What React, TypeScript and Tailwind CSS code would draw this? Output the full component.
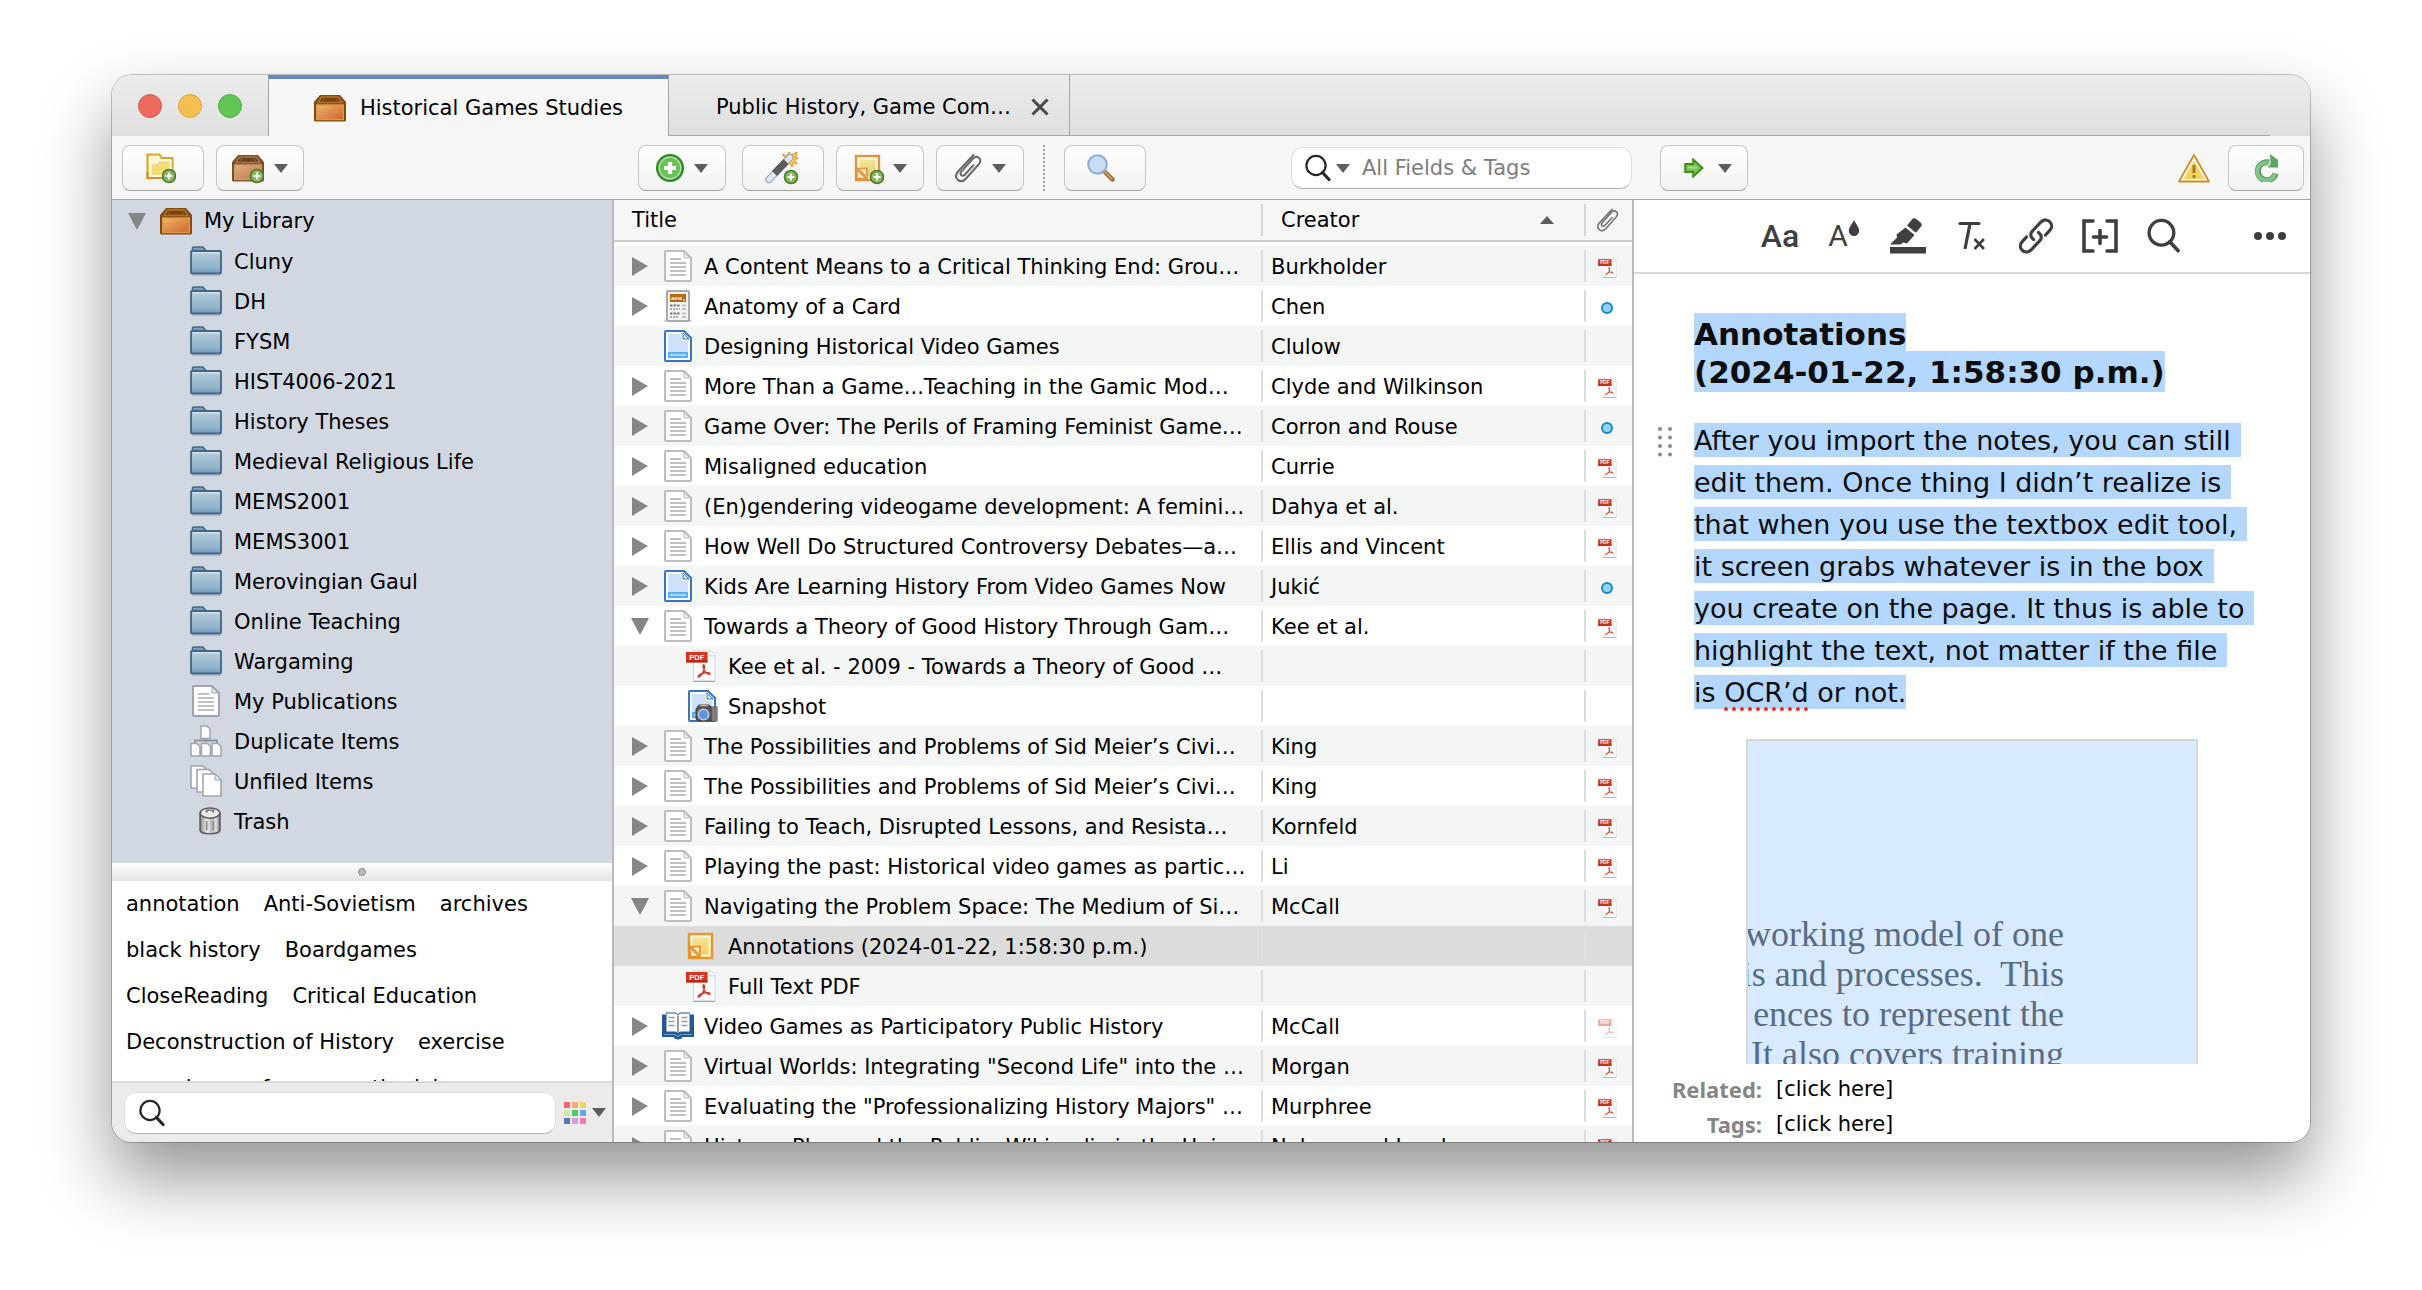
import React from "react";

/* ---------- small shared glyphs ---------- */

const TriDown = ({ className = "w-[14px] h-[9px] text-[#5e5e5e]" }: { className?: string }) => (
  <svg viewBox="0 0 14 9" className={"shrink-0 " + className} preserveAspectRatio="none" aria-hidden="true">
    <path d="M0 0h14L7 9z" fill="currentColor" />
  </svg>
);

const TriRight = () => (
  <svg viewBox="0 0 16 20" className="h-5 w-4 shrink-0 text-[#868686]" aria-hidden="true">
    <path d="M0 1l16 9-16 10z" fill="currentColor" />
  </svg>
);

const Plus = ({ x, y }: { x: number; y: number }) => (
  <g>
    <circle cx={x} cy={y} r="6.5" fill="#8ab45f" stroke="#4c7c2c" strokeWidth="1.6" />
    <path d={`M${x - 3.5} ${y}h7M${x} ${y - 3.5}v7`} stroke="#fff" strokeWidth="2.2" />
  </g>
);

const BoxIcon = ({ plus = false }: { plus?: boolean }) => (
  <svg viewBox="0 0 32 32" className="size-8 shrink-0" aria-hidden="true">
    <defs>
      <linearGradient id={plus ? "boxp" : "boxf"} x1="0" y1="0" x2="1" y2="1">
        <stop offset="0" stopColor={plus ? "#dcae7c" : "#efb668"} />
        <stop offset="1" stopColor={plus ? "#c27a4a" : "#cf6430"} />
      </linearGradient>
    </defs>
    <path d="M6 3h20l6 7v18a1.500 1.500 0 0 1-1.500 1.500h-29A1.500 1.500 0 0 1 0 28V10z" fill={plus ? "#7d4e29" : "#834910"} />
    <path d="M7.500 5h17l3.500 5.500h-24z" fill={plus ? "#6c4021" : "#7a430e"} stroke={plus ? "#a3764e" : "#b07332"} strokeWidth="1.400" />
    <path d="M10.500 5L8 10.500M21.500 5L24 10.500" stroke={plus ? "#8e6240" : "#96591e"} strokeWidth="1.200" />
    <rect x="2.700" y="13" width="26.600" height="14.500" fill={`url(#${plus ? "boxp" : "boxf"})`} stroke={plus ? "#c99a6d" : "#dd9a4b"} strokeWidth="1.400" />
    {plus && <Plus x={25} y={24} />}
  </svg>
);

const Folder = () => (
  <svg viewBox="0 0 32 30" className="h-[30px] w-8 shrink-0" aria-hidden="true">
    <defs>
      <linearGradient id="fold" x1="0" y1="0" x2="0" y2="1">
        <stop offset="0" stopColor="#b9cfdf" />
        <stop offset="0.750" stopColor="#8fb2cb" />
        <stop offset="1" stopColor="#6b9bbe" />
      </linearGradient>
    </defs>
    <path d="M2 29.500h28" stroke="#aab6c6" strokeWidth="1" />
    <path d="M2.500 5V2a1 1 0 0 1 1-1h9.500l3.500 4.500z" fill="#7ba0bf" stroke="#46688a" strokeWidth="1.600" />
    <rect x="1" y="5" width="30" height="22.500" rx="1" fill="url(#fold)" stroke="#446580" strokeWidth="1.800" />
    <path d="M2.500 6.800h27" stroke="#d3e1ea" strokeWidth="1.400" />
  </svg>
);

const Doc = ({ edge = "#bdbdbd" }: { edge?: string }) => (
  <svg viewBox="0 0 28 32" className="h-8 w-7 shrink-0" aria-hidden="true">
    <path d="M1 2a1 1 0 0 1 1-1h18l7 7v22a1 1 0 0 1-1 1H2a1 1 0 0 1-1-1z" fill="#fff" stroke={edge} strokeWidth="2" />
    <path d="M20 2v6h6z" fill="#ececec" stroke={edge} strokeWidth="1" />
    <path d="M6 9h11M6 13h16M6 17h16M6 21h16M6 25h16" stroke="#adadad" strokeWidth="1.700" />
  </svg>
);

const BlueDoc = ({ camera = false }: { camera?: boolean }) => (
  <svg viewBox="0 0 28 32" className={camera ? "h-8 w-7 shrink-0 overflow-visible" : "h-8 w-7 shrink-0"} aria-hidden="true">
    <path d="M1 2a1 1 0 0 1 1-1h18l7 7v22a1 1 0 0 1-1 1H2a1 1 0 0 1-1-1z" fill="#fff" stroke="#3a74c0" strokeWidth="2" />
    <path d="M4 4h13v7h7v17H4z" fill="#cfe0fa" />
    <path d="M19 3v6h6z" fill="#dce9fb" stroke="#3a74c0" strokeWidth="1" />
    <rect x="4" y="22" width="20" height="6" fill="#55b1f5" />
    <path d="M6 25h16" stroke="#bfe2fc" strokeWidth="1.600" />
    {camera && (
      <g>
        <path d="M8 19l3-4h10l2 2h6v14H10l-2-2z" fill="#54565a" stroke="#3b3c3f" strokeWidth="1" />
        <path d="M24 17h5v14h-5z" fill="#7c7e82" />
        <path d="M12 15.500h8" stroke="#d8b45b" strokeWidth="1.500" />
        <circle cx="15.500" cy="24.500" r="6" fill="#c4cbd6" />
        <circle cx="15.500" cy="24.500" r="4.500" fill="#5d94e0" />
      </g>
    )}
  </svg>
);

const Newspaper = () => (
  <svg viewBox="0 0 28 32" className="h-8 w-7 shrink-0" aria-hidden="true">
    <path d="M0 30.500h28" stroke="#c9c9c9" strokeWidth="2" />
    <rect x="3" y="1" width="22" height="30" rx="1" fill="#f4f4f4" stroke="#a9a9a9" strokeWidth="2" />
    <rect x="6" y="4" width="16" height="8" fill="#b9690c" />
    <path d="M8 10v-2h2v2M12 10V8h3v2M17 10V7M19 10h2" stroke="#fff" strokeWidth="1.200" fill="none" />
    <path d="M6 15.500h10M6 23.500h10" stroke="#777" strokeWidth="2" strokeDasharray="2.500 1" />
    <path d="M6 19h10M6 27h8" stroke="#aaa" strokeWidth="1.800" strokeDasharray="2 1" />
    <path d="M18 15.500h4M18 19h4M18 23.500h4M18 27h4" stroke="#c4c4c4" strokeWidth="2" />
  </svg>
);

const Pdf = ({ className }: { className: string }) => (
  <svg viewBox="0 0 30 32" className={"shrink-0 " + className} aria-hidden="true">
    <path d="M7.500 1h17.500l4 4v26H7.500z" fill="#fcfcfc" stroke="#d9d9d9" strokeWidth="1" />
    <path d="M7.500 31.500H29" stroke="#a9a9a9" strokeWidth="1.400" />
    <path d="M24 1v5h5" fill="none" stroke="#d0d0d0" strokeWidth="1" />
    <path d="M17.500 15c1.800 0 .8 4.800-.8 7.600-1.400 2.600-3.600 5-4.400 4.200-1-1 2.200-3 5.600-3.800 3.200-.8 6.400-.4 6.100.8-.3 1.200-3.600-.2-5.100-2.600-1.400-2.200-2.600-6.200-1.400-6.200z" fill="none" stroke="#d33a2c" strokeWidth="1.400" />
    <rect x="0" y="2" width="21.500" height="10.500" fill="#d5321f" />
    <path d="M0 11.500h21.500" stroke="#a8220f" strokeWidth="1.500" />
    <text x="10.800" y="10" fontSize="7.500" fontWeight="bold" fill="#fff" textAnchor="middle" fontFamily="Liberation Sans, sans-serif">PDF</text>
  </svg>
);

const Note = ({ plus = false }: { plus?: boolean }) => (
  <svg viewBox="0 0 30 30" className="size-[30px] shrink-0 overflow-visible" aria-hidden="true">
    <defs>
      <linearGradient id={plus ? "notep" : "note"} x1="0" y1="0" x2="0" y2="1">
        <stop offset="0" stopColor="#f6eaa6" />
        <stop offset="1" stopColor={plus ? "#e6c95c" : "#f4cb4c"} />
      </linearGradient>
    </defs>
    <rect x="3" y="3" width="23" height="24" fill={`url(#${plus ? "notep" : "note"})`} stroke={plus ? "#de9442" : "#e9962f"} strokeWidth="2.400" />
    <path d="M5.500 24V5.500h18v19H14" fill="none" stroke="#fdf7dd" strokeWidth="2" />
    <path d="M4 15.500h10v10H4z" fill="#fbe6c6" stroke={plus ? "#de9442" : "#e08d26"} strokeWidth="1.600" />
    <path d="M5 16.500l8.500 8.500" stroke="#e09a44" strokeWidth="3" />
    {plus && <Plus x={24} y={24} />}
  </svg>
);

const Book = () => (
  <svg viewBox="0 0 32 30" className="-ml-[2px] h-[30px] w-8 shrink-0" aria-hidden="true">
    <path d="M0 3.500h4V1.500h9.500L16 3l2.500-1.500H28v2h4v22.500H20.500c-.5 1.500-2 2.500-4.500 2.500s-4-1-4.500-2.500H0z" fill="#235a92" />
    <path d="M4.500 2.500h8.500c1.500 0 2.500.8 3 2 .500-1.200 1.500-2 3-2h8.500v18H19c-1.500 0-2.500.8-3 2-.5-1.200-1.500-2-3-2H4.500z" fill="#fdfdfd" />
    <path d="M16 4.500v17.500" stroke="#8f9cab" strokeWidth="2" />
    <path d="M6.500 6.500h6M6.500 10.500h6M6.500 14.500h6M19.500 6.500h6M19.500 10.500h6M19.500 14.500h6" stroke="#9a9a9a" strokeWidth="1.700" />
    <path d="M2 23.500h10.500c1.500 0 2.500 2 3.500 2s2-2 3.500-2H30" stroke="#6d9dcb" strokeWidth="1.200" fill="none" />
  </svg>
);

const Duplicates = () => {
  const page = (x: number, y: number) => (
    <path key={x} d={`M${x} ${y}h6l3 3v9.500h-9z`} fill="#fff" stroke="#9ea4b0" strokeWidth="1.500" />
  );
  return (
    <svg viewBox="0 0 32 32" className="size-8 shrink-0" aria-hidden="true">
      <path d="M15.500 12v5M5 18v-2.500h22V18" fill="none" stroke="#8e939d" strokeWidth="1.800" />
      {page(11, 1)}
      {page(1, 18.5)}
      {page(11.5, 18.5)}
      {page(22, 18.5)}
    </svg>
  );
};

const Unfiled = () => (
  <svg viewBox="0 0 32 32" className="size-8 shrink-0" aria-hidden="true">
    <path d="M1 1h12l4 4v18H1z" fill="#fff" stroke="#9ea4b0" strokeWidth="1.600" />
    <path d="M7 4.500h12l4 4V27H7z" fill="#fff" stroke="#9ea4b0" strokeWidth="1.600" />
    <path d="M13 9h12l6 6v16H13z" fill="#fff" stroke="#9ea4b0" strokeWidth="1.600" />
    <path d="M25 9v6h6z" fill="#ececf0" stroke="#9ea4b0" strokeWidth="1" />
  </svg>
);

const Trash = () => (
  <svg viewBox="0 0 20 30" className="ml-[9px] mr-px h-[28px] w-[22px] shrink-0" preserveAspectRatio="none" aria-hidden="true">
    <defs>
      <linearGradient id="can" x1="0" y1="0" x2="1" y2="0">
        <stop offset="0" stopColor="#8b8b8b" />
        <stop offset="0.350" stopColor="#eeeeee" />
        <stop offset="0.600" stopColor="#b5b5b5" />
        <stop offset="0.800" stopColor="#e2e2e2" />
        <stop offset="1" stopColor="#777" />
      </linearGradient>
    </defs>
    <path d="M1 7v18c0 5 18 5 18 0V7z" fill="url(#can)" stroke="#5b5b5b" strokeWidth="1.500" />
    <ellipse cx="10" cy="6.500" rx="9" ry="5.500" fill="#e9e9e9" stroke="#5b5b5b" strokeWidth="1.500" />
    <path d="M7 6V3.500h6V6" fill="none" stroke="#777" strokeWidth="1.800" />
    <path d="M7 15v10M13 15v10" stroke="#8a8a8a" strokeWidth="1.500" />
  </svg>
);

const Clip = ({ className = "h-8 w-7", stroke = "#666" }: { className?: string; stroke?: string }) => (
  <svg viewBox="0 0 28 32" className={"shrink-0 " + className} aria-hidden="true" fill="none" stroke={stroke} strokeWidth="2" strokeLinecap="round" strokeLinejoin="round">
    <path d="M19.500 3L4 19.500c-3 3.500-2.300 7 .2 8.700 2.400 1.600 5.300 1 7.600-1.500L25 12c2-2.500 1.500-5-.2-6.300-1.800-1.300-4.200-.9-6 1.100L7.500 19.300c-1.300 1.600-1.100 3.100-.2 3.900 1 .8 2.600.5 3.700-.7l8.500-9.300" />
  </svg>
);

const SearchGlyph = ({ className = "h-7 w-[26px]", stroke = "#262626", heavy = false }: { className?: string; stroke?: string; heavy?: boolean }) => (
  <svg viewBox="0 0 26 28" className={"shrink-0 " + className} aria-hidden="true" fill="none" stroke={stroke}>
    <circle cx="11" cy="11.500" r="9.600" strokeWidth={heavy ? 2.6 : 2.2} />
    <path d="M17.500 18.500l6.500 7" strokeWidth={heavy ? 2.8 : 3.2} strokeLinecap="round" />
  </svg>
);

/* ---------- data ---------- */

const collections = [
  "Cluny", "DH", "FYSM", "HIST4006-2021", "History Theses", "Medieval Religious Life",
  "MEMS2001", "MEMS3001", "Merovingian Gaul", "Online Teaching", "Wargaming",
];

const specials: [string, React.ReactNode][] = [
  ["My Publications", <span className="mx-[2px]"><Doc edge="#9ea4b0" /></span>],
  ["Duplicate Items", <Duplicates />],
  ["Unfiled Items", <Unfiled />],
  ["Trash", <Trash />],
];

const tagRows = [
  ["annotation", "Anti-Sovietism", "archives"],
  ["black history", "Boardgames"],
  ["CloseReading", "Critical Education"],
  ["Deconstruction of History", "exercise"],
  ["experience of war", "methodology"],
];

type Kind = "doc" | "news" | "blue" | "book" | "pdf" | "snap" | "note";
type Item = { t: string; c?: string; k: Kind; s: "closed" | "open" | "none"; a?: "pdf" | "faded" | "dot"; child?: boolean; selected?: boolean };

const items: Item[] = [
  { t: "A Content Means to a Critical Thinking End: Grou…", c: "Burkholder", k: "doc", s: "closed", a: "pdf" },
  { t: "Anatomy of a Card", c: "Chen", k: "news", s: "closed", a: "dot" },
  { t: "Designing Historical Video Games", c: "Clulow", k: "blue", s: "none" },
  { t: "More Than a Game...Teaching in the Gamic Mod…", c: "Clyde and Wilkinson", k: "doc", s: "closed", a: "pdf" },
  { t: "Game Over: The Perils of Framing Feminist Game…", c: "Corron and Rouse", k: "doc", s: "closed", a: "dot" },
  { t: "Misaligned education", c: "Currie", k: "doc", s: "closed", a: "pdf" },
  { t: "(En)gendering videogame development: A femini…", c: "Dahya et al.", k: "doc", s: "closed", a: "pdf" },
  { t: "How Well Do Structured Controversy Debates—a…", c: "Ellis and Vincent", k: "doc", s: "closed", a: "pdf" },
  { t: "Kids Are Learning History From Video Games Now", c: "Jukić", k: "blue", s: "closed", a: "dot" },
  { t: "Towards a Theory of Good History Through Gam…", c: "Kee et al.", k: "doc", s: "open", a: "pdf" },
  { t: "Kee et al. - 2009 - Towards a Theory of Good …", k: "pdf", s: "none", child: true },
  { t: "Snapshot", k: "snap", s: "none", child: true },
  { t: "The Possibilities and Problems of Sid Meier’s Civi…", c: "King", k: "doc", s: "closed", a: "pdf" },
  { t: "The Possibilities and Problems of Sid Meier’s Civi…", c: "King", k: "doc", s: "closed", a: "pdf" },
  { t: "Failing to Teach, Disrupted Lessons, and Resista…", c: "Kornfeld", k: "doc", s: "closed", a: "pdf" },
  { t: "Playing the past: Historical video games as partic…", c: "Li", k: "doc", s: "closed", a: "pdf" },
  { t: "Navigating the Problem Space: The Medium of Si…", c: "McCall", k: "doc", s: "open", a: "pdf" },
  { t: "Annotations (2024-01-22, 1:58:30 p.m.)", k: "note", s: "none", child: true, selected: true },
  { t: "Full Text PDF", k: "pdf", s: "none", child: true },
  { t: "Video Games as Participatory Public History", c: "McCall", k: "book", s: "closed", a: "faded" },
  { t: "Virtual Worlds: Integrating \"Second Life\" into the …", c: "Morgan", k: "doc", s: "closed", a: "pdf" },
  { t: "Evaluating the \"Professionalizing History Majors\" …", c: "Murphree", k: "doc", s: "closed", a: "pdf" },
  { t: "History, Play and the Public: Wikipedia in the Uni…", c: "Nelson and Lund", k: "doc", s: "closed", a: "pdf" },
];

const kindIcon: Record<Kind, React.ReactNode> = {
  doc: <Doc />,
  news: <Newspaper />,
  blue: <BlueDoc />,
  book: <Book />,
  pdf: <Pdf className="h-8 w-[30px]" />,
  snap: <span className="ml-[2px]"><BlueDoc camera /></span>,
  note: <Note />,
};

/* ---------- pieces ---------- */

const ToolButton = ({ label, menu = false, className = "", children }: { label: string; menu?: boolean; className?: string; children: React.ReactNode }) => (
  <button
    type="button"
    aria-label={label}
    className={
      "flex h-[46px] shrink-0 items-center justify-center gap-[10px] rounded-lg border border-[#c6c6c6] border-b-[#a2a2a2] bg-linear-to-b from-white to-[#f2f2f2] " +
      (menu ? "w-[88px] " : "w-[82px] ") + className
    }
  >
    {children}
    {menu && <TriDown />}
  </button>
);

const TabBar = () => (
  <div className="flex h-[61px] shrink-0 bg-linear-to-b from-[#ececec] to-[#dfdfdf]">
    <div className="flex w-[156px] shrink-0 items-center gap-4 pt-px pl-[26px]">
      <button type="button" aria-label="Close window" className="size-6 rounded-full border border-[#d35b4e] bg-[#ec6a5e]" />
      <button type="button" aria-label="Minimize window" className="size-6 rounded-full border border-[#d9a63d] bg-[#f4bf4f]" />
      <button type="button" aria-label="Zoom window" className="size-6 rounded-full border border-[#53ae46] bg-[#61c454]" />
    </div>
    <button type="button" className="flex w-[401px] shrink-0 items-center justify-center gap-[14px] border-x border-t-4 border-x-[#a6a6a6] border-t-[#6787c4] bg-[#f6f6f6]">
      <BoxIcon />
      <span>Historical Games Studies</span>
    </button>
    <div className="flex w-[401px] shrink-0 items-center justify-end gap-5 border-r border-b border-[#a6a6a6] pt-1 pr-5">
      <button type="button" className="whitespace-nowrap">Public History, Game Com…</button>
      <button type="button" aria-label="Close tab">
        <svg viewBox="0 0 18 18" className="size-[18px]" stroke="#484848" strokeWidth="3"><path d="M1.500 1.500l15 15M16.500 1.500l-15 15" /></svg>
      </button>
    </div>
    <div className="mr-10 flex-1 border-b border-[#a6a6a6]" />
  </div>
);

const Toolbar = () => (
  <div className="grid h-16 shrink-0 grid-cols-[502px_minmax(0,1020fr)_minmax(0,676fr)] items-center border-b border-[#a6a6a6] bg-[#f6f6f6] pt-px">
    <div className="flex gap-3 pl-[10px]">
      <ToolButton label="New collection">
        <svg viewBox="0 0 30 32" className="mr-1 h-8 w-[30px]" aria-hidden="true">
          <path d="M1.500 26V2.500h12l2 3.500h11V26z" fill="#fdf6d2" stroke="#d9a92e" strokeWidth="2.200" />
          <path d="M4.500 24V12.500h7l3-3h10V24z" fill="#f4dd74" stroke="#fffbe8" strokeWidth="2" />
          <path d="M5 13h6l3-3h10" fill="none" stroke="#e6c455" strokeWidth="1.200" />
          <path d="M1.500 20v6h25" fill="none" stroke="#dd8f2b" strokeWidth="2.200" />
          <Plus x={23} y={24} />
        </svg>
      </ToolButton>
      <ToolButton label="New library" menu><BoxIcon plus /></ToolButton>
    </div>

    <div className="flex items-center gap-3 pl-6">
      <ToolButton label="New item" menu className="mr-1">
        <svg viewBox="0 0 28 28" className="size-7" aria-hidden="true">
          <circle cx="14" cy="14" r="13" fill="#5cb84f" stroke="#2c8a26" strokeWidth="2" />
          <circle cx="14" cy="14" r="10.800" fill="#6cc05b" stroke="#b6e0a6" strokeWidth="1.200" />
          <path d="M14 8v12M8 14h12" stroke="#fff" strokeWidth="4.200" />
        </svg>
      </ToolButton>
      <ToolButton label="Add item by identifier">
        <svg viewBox="0 0 32 32" className="mr-1 size-8 overflow-visible" aria-hidden="true">
          <path d="M24 0l1.500 3.500L32 0l-1.500 5 2.500 1-3.500 2 3 4-4.500-1.500L27 15l-4-6-6-7 5 2z" fill="#fbd034" stroke="#f08a24" strokeWidth="1" />
          <path d="M4 27.500L25 5.500" stroke="#9aa9bc" strokeWidth="7.500" strokeLinecap="round" />
          <path d="M4 27.500L25 5.500" stroke="#dfe8f2" strokeWidth="5" strokeLinecap="round" />
          <path d="M9.500 21.500L21 9.500" stroke="#5c5c5c" strokeWidth="7" />
          <Plus x={26} y={25} />
        </svg>
      </ToolButton>
      <ToolButton label="New note" menu><Note plus /></ToolButton>
      <ToolButton label="Add attachment" menu><Clip /></ToolButton>
      <div className="mx-[7px] h-[46px] shrink-0 border-l-2 border-dotted border-[#9d9d9d]" />
      <ToolButton label="Advanced search">
        <svg viewBox="0 0 28 28" className="mr-2 size-7" aria-hidden="true">
          <path d="M17 17l8.500 8.500" stroke="#a3682c" strokeWidth="4.500" strokeLinecap="round" />
          <path d="M18 18l7 7" stroke="#d7a36a" strokeWidth="1.500" strokeLinecap="round" />
          <circle cx="10.500" cy="10.500" r="9.300" fill="#c9dcf5" stroke="#8ea9d4" strokeWidth="2" />
        </svg>
      </ToolButton>
      <div className="mr-[2px] ml-auto flex h-[42px] w-[341px] items-center gap-[5px] rounded-xl border border-[#dedede] border-b-[#b2b2b2] bg-white pl-[13px]">
        <SearchGlyph />
        <TriDown />
        <input type="search" aria-label="Search library" placeholder="All Fields & Tags" className="ml-[7px] w-full min-w-0 bg-transparent outline-none placeholder:text-[#7d7d7d]" />
      </div>
    </div>

    <div className="flex items-center pr-[6px] pl-[26px]">
      <ToolButton label="Locate" menu>
        <svg viewBox="0 0 20 20" className="mr-1 ml-2 size-5" aria-hidden="true">
          <path d="M1.200 6h8V1.500L18.500 10 9.200 18.500V14h-8z" fill="#7cbf52" stroke="#3f8f1e" strokeWidth="2" />
          <path d="M4 9.500h9" stroke="#a9d98c" strokeWidth="2" />
        </svg>
      </ToolButton>
      <button type="button" aria-label="Sync error" className="mr-[18px] ml-auto">
        <svg viewBox="0 0 32 30" className="h-[30px] w-8">
          <path d="M16 2L31 28.500H1z" fill="#fff" stroke="#d28b22" strokeWidth="1.800" strokeLinejoin="round" />
          <path d="M16 7.500L26.500 26h-21z" fill="#f3d35b" />
          <path d="M16 12v8M16 22v3" stroke="#ab762d" strokeWidth="3" />
        </svg>
      </button>
      <button type="button" aria-label="Sync" className="flex h-[46px] w-[76px] items-center justify-center rounded-lg border border-[#c6c6c6] border-b-[#a2a2a2] bg-linear-to-b from-white to-[#f2f2f2]">
        <svg viewBox="0 0 26 28" className="h-7 w-[26px]">
          <path d="M22.500 19.500A9 9 0 1 1 16 8.500" fill="none" stroke="#4f9a57" strokeWidth="6" />
          <path d="M22 19.700A9 9 0 1 1 15.500 8.700" fill="none" stroke="#84c48a" strokeWidth="4" />
          <path d="M17 0l8 6v7.500H14.500l3-3.500z" fill="#5aa662" />
        </svg>
      </button>
    </div>
  </div>
);

const Sidebar = () => (
  <aside className="flex min-h-0 flex-col border-r-2 border-[#bababa]">
    <ul className="min-h-0 flex-1 overflow-hidden bg-[#d2d8e2] pt-px">
      <li className="flex h-10 items-center pl-4">
        <TriDown className="mr-[14px] h-[17px] w-[18px] text-[#868686]" />
        <BoxIcon />
        <span className="ml-3">My Library</span>
      </li>
      {collections.map((name) => (
        <li key={name} className="flex h-10 items-center gap-3 pl-[78px]"><Folder /><span className="pt-0.5">{name}</span></li>
      ))}
      {specials.map(([name, icon]) => (
        <li key={name} className="flex h-10 items-center gap-3 pl-[78px]">{icon}<span className="pt-0.5">{name}</span></li>
      ))}
    </ul>
    <div className="flex h-[18px] shrink-0 items-center justify-center bg-linear-to-b from-white to-[#e4e4e4]">
      <div className="size-2 rounded-full border border-[#8f8f8f] bg-[#b9b9b9]" />
    </div>
    <div className="h-[200px] shrink-0 overflow-hidden bg-white pl-[14px]">
      {tagRows.map((row) => (
        <div key={row[0]} className="flex h-[46px] items-center gap-6">
          {row.map((tag) => <button key={tag} type="button" className="whitespace-nowrap">{tag}</button>)}
        </div>
      ))}
    </div>
    <div className="flex h-[61px] shrink-0 items-center gap-2 border-t-2 border-[#d9d9d9] bg-[#ebebeb] pt-1 pr-[6px] pb-1 pl-3">
      <div className="flex h-[42px] flex-1 items-center gap-2 rounded-xl border border-[#dedede] border-b-[#b2b2b2] bg-white pl-[14px]">
        <SearchGlyph />
        <input type="search" aria-label="Filter tags" className="w-full min-w-0 bg-transparent outline-none" />
      </div>
      <button type="button" aria-label="Tag options" className="flex items-center gap-[6px]">
        <span className="grid grid-cols-3 gap-[2px]">
          <i className="size-[6px] bg-[#ff6666]" /><i className="size-[6px] bg-[#ffa870]" /><i className="size-[6px] bg-[#efd35f]" />
          <i className="size-[6px] bg-[#cde8a9]" /><i className="size-[6px] bg-[#4bcb66]" /><i className="size-[6px] bg-[#5cabe9]" />
          <i className="size-[6px] bg-[#5877b4]" /><i className="size-[6px] bg-[#d99bdf]" /><i className="size-[6px] bg-[#ff75ae]" />
        </span>
        <TriDown />
      </button>
    </div>
  </aside>
);

const Attachment = ({ a }: { a?: Item["a"] }) => {
  if (a === "dot") return <span className="block size-3 rounded-full border-2 border-[#1688cb] bg-[#93d2fa]" />;
  if (a === "faded") return <span className="opacity-40"><Pdf className="h-5 w-[19px]" /></span>;
  if (a === "pdf") return <Pdf className="h-5 w-[19px]" />;
  return null;
};

const ItemTable = () => (
  <div className="min-h-0 overflow-hidden border-r-2 border-[#bababa] bg-white">
    <table className="w-full table-fixed border-collapse text-left whitespace-nowrap">
      <colgroup>
        <col />
        <col className="w-[323px]" />
        <col className="w-12" />
      </colgroup>
      <thead>
        <tr>
          <th className="p-0 pb-1 font-normal">
            <div className="flex h-[42px] items-center border-b-2 border-[#cbcbcb] bg-[#f6f6f6] pl-[18px]">Title</div>
          </th>
          <th className="p-0 pb-1 font-normal" aria-sort="ascending">
            <div className="flex h-[42px] items-center border-b-2 border-[#cbcbcb] bg-[#f6f6f6]">
              <div className="flex h-8 flex-1 items-center border-l-2 border-[#d6d6d6] pr-[30px] pl-[18px]">
                <span className="flex-1">Creator</span>
                <TriDown className="h-2 w-[14px] rotate-180 text-[#5e5e5e]" />
              </div>
            </div>
          </th>
          <th className="p-0 pb-1 font-normal" aria-label="Attachments">
            <div className="flex h-[42px] items-center border-b-2 border-[#cbcbcb] bg-[#f6f6f6]">
              <div className="flex h-8 flex-1 items-center justify-center border-l-2 border-[#d6d6d6] pr-1">
                <Clip className="h-[26px] w-[23px]" stroke="#747474" />
              </div>
            </div>
          </th>
        </tr>
      </thead>
      <tbody>
        {items.map((it, i) => (
          <tr key={i} className={it.selected ? "bg-[#dcdcdc]" : i % 2 === 0 ? "bg-[#f4f5f5]" : "bg-white"}>
            <td className="p-0">
              <div className={"flex h-10 items-center overflow-hidden " + (it.child ? "pl-[72px]" : "pl-[18px]")}>
                {!it.child && (
                  <span className="mr-4 flex w-4 shrink-0 justify-center">
                    {it.s === "closed" && <TriRight />}
                    {it.s === "open" && <TriDown className="-mx-px h-[17px] w-[18px] text-[#868686]" />}
                  </span>
                )}
                <span className={"flex shrink-0 items-center " + (it.child ? "w-[42px]" : "w-10")}>{kindIcon[it.k]}</span>
                <span className="pt-0.5">{it.t}</span>
              </div>
            </td>
            <td className="p-0">
              <div className={"flex h-8 items-center border-l-2 pt-0.5 pl-2 " + (it.selected ? "border-[#e0e0e0]" : "border-[#dcdcdc]")}>{it.c}</div>
            </td>
            <td className="p-0">
              <div className={"flex h-8 items-center justify-center border-l-2 pt-1 pr-1 " + (it.selected ? "border-[#e0e0e0]" : "border-[#dcdcdc]")}>
                <Attachment a={it.a} />
              </div>
            </td>
          </tr>
        ))}
      </tbody>
    </table>
  </div>
);

const noteLines = [
  "After you import the notes, you can still",
  "edit them. Once thing I didn’t realize is",
  "that when you use the textbox edit tool,",
  "it screen grabs whatever is in the box",
  "you create on the page. It thus is able to",
  "highlight the text, not matter if the file",
];

const EditorButton = ({ label, children }: { label: string; children: React.ReactNode }) => (
  <button type="button" aria-label={label} className="flex size-10 items-center justify-center text-[#3f3f3f]">{children}</button>
);

const NotePane = () => (
  <section className="flex min-h-0 flex-col bg-white">
    <div className="flex h-[74px] shrink-0 items-center justify-end gap-6 border-b-2 border-[#d8d8d8] pr-5">
      <EditorButton label="Format text">
        <span className="font-['Roboto',sans-serif] text-[32px] leading-none font-medium">Aa</span>
      </EditorButton>
      <EditorButton label="Highlight text colour">
        <span className="font-['Roboto',sans-serif] text-[30px] leading-none">A</span>
        <svg viewBox="0 0 12 18" className="mb-4 h-[17px] w-3" aria-hidden="true"><path d="M6 0c2 4.500 5.500 7.500 5.500 11.500a5.500 5.500 0 0 1-11 0C.5 7.500 4 4.500 6 0z" fill="currentColor" /></svg>
      </EditorButton>
      <EditorButton label="Highlight">
        <svg viewBox="0 0 36 36" className="size-9" aria-hidden="true" fill="currentColor">
          <path d="M0 29h36v6.500H0z" />
          <path d="M17 7.500l5-6a3 3 0 0 1 4.200-.5l4.300 3.600a3 3 0 0 1 .4 4.200l-5 6z" />
          <path d="M15.500 9.500l9 7.500-7.500 8.500-4-1-2 2H0l7-7-.500-3z" />
        </svg>
      </EditorButton>
      <EditorButton label="Clear formatting">
        <svg viewBox="0 0 30 30" className="h-[30px] w-[30px]" aria-hidden="true" fill="none" stroke="currentColor">
          <path d="M3 2.500h19" strokeWidth="3.200" strokeLinecap="round" />
          <path d="M13 2.500L8 28" strokeWidth="3.200" />
          <path d="M17.500 18l9.500 10M27 18l-9.500 10" strokeWidth="2.600" />
        </svg>
      </EditorButton>
      <EditorButton label="Insert link">
        <svg viewBox="0 0 36 36" className="size-9" aria-hidden="true" fill="none" stroke="currentColor" strokeWidth="3.200" strokeLinecap="round">
          <path d="M15.500 21.500c-3.500-2.500-3.500-6-1-8.500l8.500-9c3-2.800 6.800-2.600 9 0 2.200 2.400 2.200 5.800 0 8.200l-4.500 4.800" />
          <path d="M20.500 14.500c3.500 2.500 3.500 6 1 8.500L13 32c-3 2.800-6.800 2.600-9 0-2.200-2.400-2.200-5.800 0-8.200L8.500 19" />
        </svg>
      </EditorButton>
      <EditorButton label="Insert citation">
        <svg viewBox="0 0 36 34" className="h-[34px] w-9" aria-hidden="true" fill="none" stroke="currentColor" strokeWidth="3.600">
          <path d="M11 2H2v30h9M25 2h9v30h-9M18 11.500v13M11.500 18h13" strokeLinecap="round" />
        </svg>
      </EditorButton>
      <EditorButton label="Find">
        <SearchGlyph className="h-[36px] w-9" stroke="#3f3f3f" heavy />
      </EditorButton>
      <span className="ml-[42px]">
        <EditorButton label="More">
          <svg viewBox="0 0 32 8" className="h-2 w-8" aria-hidden="true" fill="currentColor">
            <circle cx="4" cy="4" r="4" /><circle cx="16" cy="4" r="4" /><circle cx="28" cy="4" r="4" />
          </svg>
        </EditorButton>
      </span>
    </div>

    <article className="relative min-h-0 flex-1 overflow-hidden pt-[39px] pl-[60px] text-[#0d0d0d]">
      <h1 className="text-[31px] font-bold whitespace-nowrap">
        <span className="block h-[38px] w-fit bg-[#b3d7ff] leading-[42px]">Annotations</span>
        <span className="block h-[41px] w-fit bg-[#b3d7ff] leading-[42px]">(2024-01-22, 1:58:30 p.m.)</span>
      </h1>
      <p className="relative mt-[31px] text-[27px] whitespace-nowrap">
        <svg viewBox="0 0 14 30" className="absolute top-1 -left-9 h-[30px] w-[14px]" fill="#8a8a8a" aria-hidden="true">
          {[2, 10.5, 19, 27.5].map((y) => <g key={y}><circle cx="2" cy={y} r="2" /><circle cx="12" cy={y} r="2" /></g>)}
        </svg>
        {noteLines.map((l) => <span key={l} className="mb-2 block h-[34px] w-fit bg-[#b3d7ff] pr-[10px] leading-[36px]">{l}</span>)}
        <span className="block h-[34px] w-fit bg-[#b3d7ff] leading-[36px]">
          is <span className="underline decoration-[#ff2020] decoration-dotted decoration-[4px] underline-offset-[5px]">OCR’d</span> or not.
        </span>
      </p>
      <div className="mt-[30px] ml-[52px] h-[520px] w-[452px] overflow-hidden border-2 border-[#d8d8d8] bg-[#d8eaff] pt-[173px] pr-[132px] font-['Liberation_Serif',serif] text-[36px] leading-[40px] whitespace-pre text-[#586b84]">
        {["working model of one", "is and processes.  This", "ences to represent the", "It also covers training"].map((l) => (
          <div key={l} className="flex justify-end overflow-hidden"><span>{l}</span></div>
        ))}
      </div>
    </article>

    <dl className="grid shrink-0 grid-cols-[128px_1fr] gap-x-[14px] pt-2 leading-[35px]">
      <dt className="text-right font-['Noto_Sans',sans-serif] text-[22px] font-bold text-[#868686]">Related:</dt>
      <dd><button type="button">[click here]</button></dd>
      <dt className="text-right font-['Noto_Sans',sans-serif] text-[22px] font-bold text-[#868686]">Tags:</dt>
      <dd><button type="button">[click here]</button></dd>
    </dl>
  </section>
);

export default function App() {
  return (
    <div className="flex h-screen min-h-[700px] bg-white px-28 pt-[75px] pb-[148px] font-['DejaVu_Sans',sans-serif] text-[21px] leading-[28px] text-black">
      <main className="flex min-w-0 flex-1 flex-col overflow-hidden rounded-[20px] bg-white shadow-[0_0_0_1px_rgba(0,0,0,0.22),0_36px_70px_rgba(0,0,0,0.42)]">
        <TabBar />
        <Toolbar />
        <div className="grid min-h-0 flex-1 grid-cols-[502px_minmax(0,1020fr)_minmax(0,676fr)] grid-rows-[minmax(0,1fr)]">
          <Sidebar />
          <ItemTable />
          <NotePane />
        </div>
      </main>
    </div>
  );
}
